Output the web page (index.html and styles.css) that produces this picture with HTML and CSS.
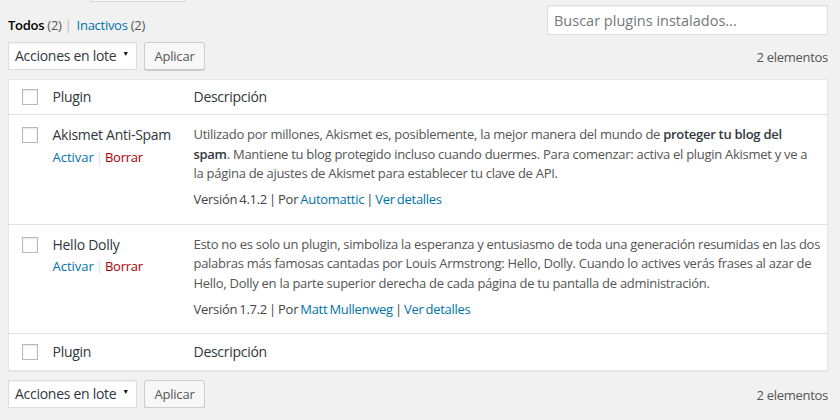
FILE: index.html
```html
<!DOCTYPE html>
<html lang="es">
<head>
<meta charset="utf-8">
<title>Plugins</title>
<link rel="stylesheet" href="styles.css">
</head>
<body>
<div class="wrap">
  <div class="page-head">
    <div class="title-stub"></div>
    <div class="add-new-stub"></div>
  </div>

  <div class="top-row">
    <ul class="subsubsub">
      <li><span class="current">Todos</span> <span class="count">(2)</span> <span class="sep">|</span></li>
      <li class="next"><a href="#" class="link">Inactivos</a> <span class="count">(2)</span></li>
    </ul>
    <input class="search" type="search" placeholder="Buscar plugins instalados...">
  </div>

  <div class="tablenav">
    <div class="actions">
      <div class="select">Acciones en lote <span class="caret">▼</span></div>
      <button class="button" type="button">Aplicar</button>
    </div>
    <div class="displaying">2 elementos</div>
  </div>

  <table class="plugins">
    <colgroup>
      <col class="c-check">
      <col class="c-name">
      <col class="c-desc">
    </colgroup>
    <thead>
      <tr>
        <td class="check"><input type="checkbox"></td>
        <th>Plugin</th>
        <th>Descripción</th>
      </tr>
    </thead>
    <tbody>
      <tr class="row">
        <td class="check"><input type="checkbox"></td>
        <td class="title">
          <div class="name">Akismet Anti-Spam</div>
          <div class="row-actions"><a href="#" class="link">Activar</a> <span class="pipe">|</span> <a href="#" class="delete">Borrar</a></div>
        </td>
        <td class="desc">
          <p class="text">Utilizado por millones, Akismet es, posiblemente, la mejor manera del mundo de <strong>proteger tu blog del</strong><br><strong>spam</strong>. Mantiene tu blog protegido incluso cuando duermes. Para comenzar: activa el plugin Akismet y ve a<br>la página de ajustes de Akismet para establecer tu clave de API.</p>
          <p class="meta">Versión 4.1.2 | Por <a href="#" class="link">Automattic</a> | <a href="#" class="link">Ver detalles</a></p>
        </td>
      </tr>
      <tr class="row">
        <td class="check"><input type="checkbox"></td>
        <td class="title">
          <div class="name">Hello Dolly</div>
          <div class="row-actions"><a href="#" class="link">Activar</a> <span class="pipe">|</span> <a href="#" class="delete">Borrar</a></div>
        </td>
        <td class="desc">
          <p class="text">Esto no es solo un plugin, simboliza la esperanza y entusiasmo de toda una generación resumidas en las dos<br>palabras más famosas cantadas por Louis Armstrong: Hello, Dolly. Cuando lo actives verás frases al azar de<br>Hello, Dolly en la parte superior derecha de cada página de tu pantalla de administración.</p>
          <p class="meta">Versión 1.7.2 | Por <a href="#" class="link">Matt Mullenweg</a> | <a href="#" class="link">Ver detalles</a></p>
        </td>
      </tr>
    </tbody>
    <tfoot>
      <tr>
        <td class="check"><input type="checkbox"></td>
        <th>Plugin</th>
        <th>Descripción</th>
      </tr>
    </tfoot>
  </table>

  <div class="tablenav bottom">
    <div class="actions">
      <div class="select">Acciones en lote <span class="caret">▼</span></div>
      <button class="button" type="button">Aplicar</button>
    </div>
    <div class="displaying">2 elementos</div>
  </div>
</div>
</body>
</html>
```

FILE: styles.css
```css
html, body {
  margin: 0;
  padding: 0;
  background: #f1f1f1;
}
body {
  font-family: "Open Sans", "Noto Sans", sans-serif;
  font-size: 13px;
  line-height: 19.5px;
  letter-spacing: -0.28px;
  color: #444;
  overflow: hidden;
}
.wrap {
  padding: 0 12px 0 8px;
}
a { text-decoration: none; }
.link { color: #0073aa; }
.delete { color: #a00; }

.page-head {
  height: 2px;
  display: flex;
  align-items: flex-end;
}
.title-stub {
  width: 32px;
  margin-right: 50px;
}
.add-new-stub {
  width: 95px;
  height: 2px;
  box-sizing: border-box;
  border: 1px solid #d4d4d4;
  border-top: 0;
  background: #f7f7f7;
}

.top-row {
  display: flex;
  justify-content: space-between;
  align-items: flex-start;
  margin-top: 3px;
}
.subsubsub {
  list-style: none;
  margin: 10px 0 0;
  padding: 0;
  display: flex;
  line-height: 20px;
  color: #666;
}
.subsubsub .next { margin-left: 5px; }
.current { color: #000; font-weight: 600; }
.count { color: #555; }
.sep { color: #bbb; }
.search {
  width: 281px;
  height: 30px;
  box-sizing: border-box;
  margin: 0;
  border: 1px solid #ddd;
  background: #fff;
  box-shadow: inset 0 1px 2px rgba(0,0,0,.07);
  font-family: inherit;
  font-size: 14.5px;
  letter-spacing: 0;
  padding: 0 6px;
  color: #32373c;
  outline: none;
}
.search::placeholder { color: #72777c; }

.tablenav {
  display: flex;
  justify-content: space-between;
  align-items: center;
  height: 28px;
  margin: 7px 0 9px;
}
.tablenav.bottom { margin: 9px 0 0; }
.actions {
  display: flex;
  align-items: center;
  gap: 7px;
}
.select {
  box-sizing: border-box;
  width: 129px;
  height: 28px;
  border: 1px solid #ddd;
  background: #fff;
  box-shadow: inset 0 1px 2px rgba(0,0,0,.07);
  font-size: 14px;
  line-height: 26px;
  padding: 0 7px 0 6px;
  color: #32373c;
  display: flex;
  justify-content: space-between;
}
.caret { font-size: 7px; color: #111; line-height: 22px; }
.button {
  box-sizing: border-box;
  height: 28px;
  width: 61px;
  border: 1px solid #ccc;
  border-radius: 3px;
  background: #f7f7f7;
  box-shadow: 0 1px 0 #ccc;
  color: #555;
  font-family: inherit;
  font-size: 13px;
  letter-spacing: -0.2px;
  padding: 0;
}
.displaying { color: #555; padding-top: 3px; }

.plugins {
  width: 100%;
  border-collapse: collapse;
  table-layout: fixed;
  background: #fff;
  border: 1px solid #e5e5e5;
  box-shadow: 0 1px 1px rgba(0,0,0,.04);
}
.c-check { width: 34px; }
.c-name { width: 141px; }
.plugins th {
  text-align: left;
  font-weight: 400;
  font-size: 14px;
  color: #32373c;
  padding: 0 10px;
  height: 34px;
}
.plugins thead tr { border-bottom: 1px solid #e1e1e1; }
.plugins tfoot tr { border-top: 1px solid #e1e1e1; }
.plugins tfoot th, .plugins tfoot td { height: 36px; }
.plugins td { padding: 0; vertical-align: middle; }
.plugins td.check { padding-left: 13px; }
.row td { vertical-align: top; padding: 10px 10px 14px; }
.row td.check { padding: 12px 0 0 13px; }
.row + .row td { border-top: 1px solid #e1e1e1; }
.plugins input[type=checkbox] {
  -webkit-appearance: none;
  appearance: none;
  display: block;
  margin: 0;
  width: 16px;
  height: 16px;
  border: 1px solid #b4b9be;
  background: #fff;
  box-shadow: inset 0 1px 2px rgba(0,0,0,.1);
  box-sizing: border-box;
}
.name { color: #32373c; font-size: 14px; white-space: nowrap; }
.row-actions { margin-top: 3px; color: #ddd; word-spacing: -1px; }
.row-actions .link { letter-spacing: 0; }
.pipe { color: #ddd; }
.desc p { margin: 0; white-space: nowrap; }
.desc .text { color: #555; }
.desc strong { font-weight: 600; color: #32373c; }
.desc .meta { margin-top: 6.5px; color: #444; word-spacing: -1px; }
```
